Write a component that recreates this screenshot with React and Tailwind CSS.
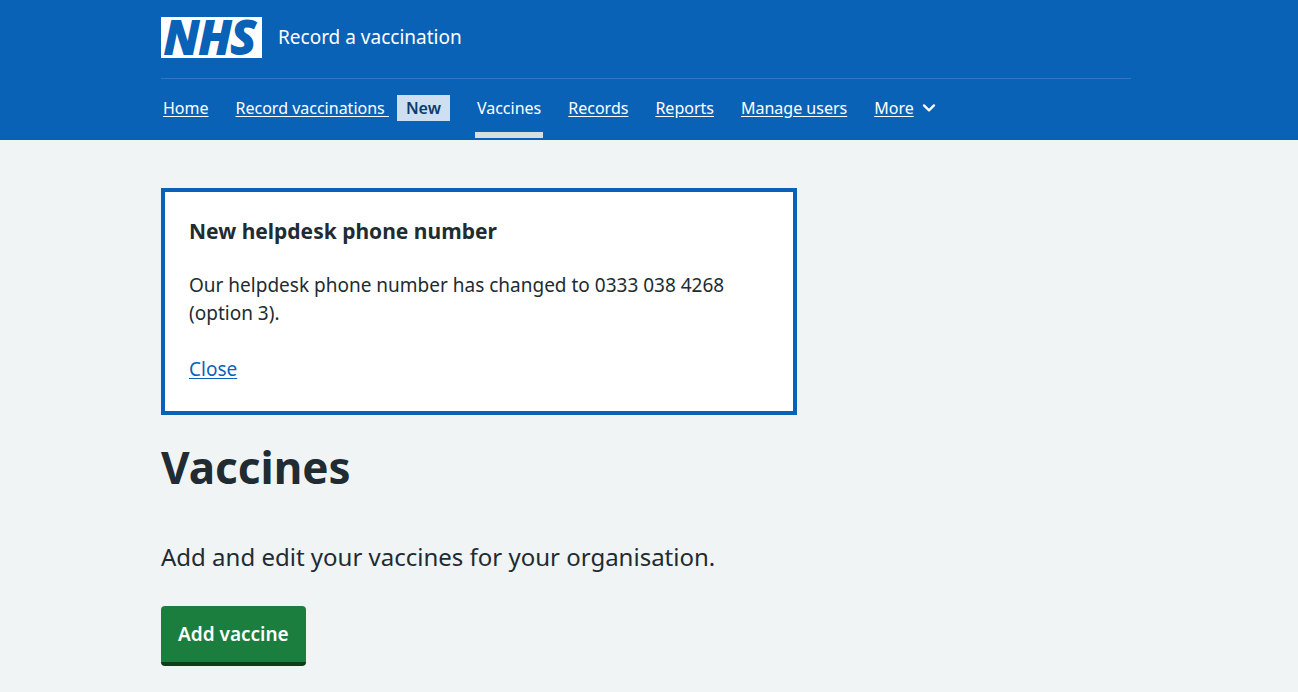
const links = [
  { label: 'Home' },
  { label: 'Record vaccinations', tag: 'New' },
  { label: 'Vaccines', current: true },
  { label: 'Records' },
  { label: 'Reports' },
  { label: 'Manage users' },
];

function NhsLogo() {
  return (
    <svg className="h-[41px] w-[101px] shrink-0 overflow-visible" viewBox="0 0 101 41" role="img" aria-label="NHS">
      <rect width="101" height="41" fill="#fff" />
      <text
        x="3"
        y="36.5"
        fill="#0a62b7"
        stroke="#0a62b7"
        strokeWidth="2"
        fontFamily="'Open Sans', 'Noto Sans', sans-serif"
        fontSize="46"
        fontWeight="700"
        fontStyle="italic"
      >
        NHS
      </text>
    </svg>
  );
}

function NavItem({ label, tag, current }) {
  return (
    <li className="flex">
      <a
        href="#"
        aria-current={current ? 'page' : undefined}
        className={
          current
            ? 'flex items-center border-y-[6px] border-t-transparent border-b-[#d8dde0] px-0.5 pb-0.5'
            : 'flex items-center gap-2 px-0.5 pb-0.5'
        }
      >
        <span className={current ? '' : 'underline underline-offset-2 whitespace-pre'}>
          {tag ? label + ' ' : label}
        </span>
        {tag && (
          <span className="bg-[#cedff1] px-[9px] leading-[26px] font-semibold text-[#0a3b6c]">{tag}</span>
        )}
      </a>
    </li>
  );
}

export default function App() {
  return (
    <div className="min-h-screen bg-[#f0f4f5] font-['Noto_Sans','Open_Sans',sans-serif] text-[#212b32]">
      <header className="bg-[#0a62b7] pr-1.5 text-white">
        <div className="mx-auto max-w-[970px]">
          <div className="flex items-center gap-4 pt-[17px] pb-5">
            <a href="#" aria-label="NHS home">
              <NhsLogo />
            </a>
            <a href="#" className="pb-0.5 text-[19px] leading-7">Record a vaccination</a>
          </div>
          <nav aria-label="Menu" className="border-t border-[#3278c1] pb-0.5">
            <ul className="flex h-[59px] gap-[23px] text-base">
              {links.map((link) => (
                <NavItem key={link.label} {...link} />
              ))}
              <li className="flex">
                <button type="button" className="flex items-center gap-2 px-0.5 pb-0.5">
                  <span className="underline underline-offset-2">More</span>
                  <svg className="h-2 w-3.5" viewBox="0 0 14 8" fill="none" aria-hidden="true">
                    <path d="M2 1.4 7 6.4l5-5" stroke="currentColor" strokeWidth="2.2" strokeLinecap="round" strokeLinejoin="round" />
                  </svg>
                </button>
              </li>
            </ul>
          </nav>
        </div>
      </header>

      <main className="pr-1.5">
        <div className="mx-auto max-w-[970px] pt-12">
          <section aria-labelledby="notice" className="max-w-[636px] border-4 border-[#0a62b7] bg-white px-6 pt-[23px] pb-7">
            <h2 id="notice" className="text-[21px] leading-8 font-bold">New helpdesk phone number</h2>
            <p className="mt-6 text-[19px] leading-7">
              Our helpdesk phone number has changed to 0333 038 4268 (option 3).
            </p>
            <a href="#" className="mt-7 inline-block text-[19px] leading-7 text-[#0a62b7] underline underline-offset-2">
              Close
            </a>
          </section>

          <h1 className="mt-6 text-[44px] leading-14 font-bold">Vaccines</h1>
          <p className="mt-[42px] text-[24px] leading-10">Add and edit your vaccines for your organisation.</p>
          <button
            type="button"
            className="mt-[29px] mb-6 rounded-[4px] border-b-4 border-[#0a3f1c] bg-[#1c7e3e] px-[17px] py-[14px] text-[19px] leading-7 font-semibold text-white"
          >
            Add vaccine
          </button>
        </div>
      </main>
    </div>
  );
}
